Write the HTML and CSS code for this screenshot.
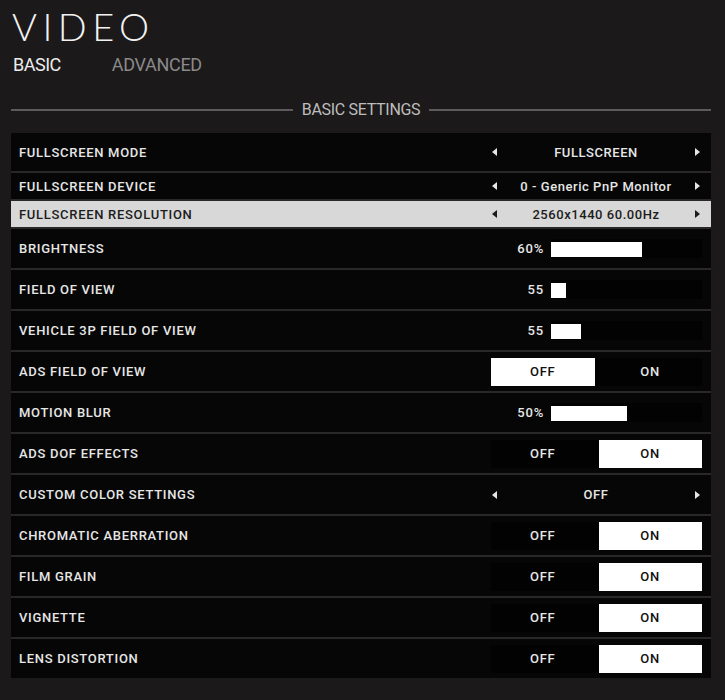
FILE: index.html
```html
<!DOCTYPE html>
<html lang="en">
<head>
<meta charset="utf-8">
<title>Video Settings</title>
<link rel="stylesheet" href="styles.css">
</head>
<body>
<div class="page">
  <h1 class="title">VIDEO</h1>
  <nav class="tabs">
    <span class="tab active">BASIC</span>
    <span class="tab">ADVANCED</span>
  </nav>
  <div class="section-head">
    <span class="line"></span>
    <span class="section-title">BASIC SETTINGS</span>
    <span class="line"></span>
  </div>
  <div class="panel">
    <div class="row tall">
      <span class="label">FULLSCREEN MODE</span>
      <div class="control selector"><span class="arrow left"></span><span class="value">FULLSCREEN</span><span class="arrow right"></span></div>
    </div>
    <div class="row short">
      <span class="label">FULLSCREEN DEVICE</span>
      <div class="control selector"><span class="arrow left"></span><span class="value">0 - Generic PnP Monitor</span><span class="arrow right"></span></div>
    </div>
    <div class="row short selected">
      <span class="label">FULLSCREEN RESOLUTION</span>
      <div class="control selector"><span class="arrow left"></span><span class="value">2560x1440 60.00Hz</span><span class="arrow right"></span></div>
    </div>
    <div class="row">
      <span class="label">BRIGHTNESS</span>
      <div class="control slider"><span class="num">60%</span><span class="track"><span class="fill" style="width:60%"></span></span></div>
    </div>
    <div class="row">
      <span class="label">FIELD OF VIEW</span>
      <div class="control slider"><span class="num">55</span><span class="track"><span class="fill" style="width:10%"></span></span></div>
    </div>
    <div class="row">
      <span class="label">VEHICLE 3P FIELD OF VIEW</span>
      <div class="control slider"><span class="num">55</span><span class="track"><span class="fill" style="width:20%"></span></span></div>
    </div>
    <div class="row">
      <span class="label">ADS FIELD OF VIEW</span>
      <div class="control toggle"><span class="opt on">OFF</span><span class="opt">ON</span></div>
    </div>
    <div class="row">
      <span class="label">MOTION BLUR</span>
      <div class="control slider"><span class="num">50%</span><span class="track"><span class="fill" style="width:50%"></span></span></div>
    </div>
    <div class="row">
      <span class="label">ADS DOF EFFECTS</span>
      <div class="control toggle"><span class="opt">OFF</span><span class="opt on">ON</span></div>
    </div>
    <div class="row">
      <span class="label">CUSTOM COLOR SETTINGS</span>
      <div class="control selector"><span class="arrow left"></span><span class="value">OFF</span><span class="arrow right"></span></div>
    </div>
    <div class="row">
      <span class="label">CHROMATIC ABERRATION</span>
      <div class="control toggle"><span class="opt">OFF</span><span class="opt on">ON</span></div>
    </div>
    <div class="row">
      <span class="label">FILM GRAIN</span>
      <div class="control toggle"><span class="opt">OFF</span><span class="opt on">ON</span></div>
    </div>
    <div class="row">
      <span class="label">VIGNETTE</span>
      <div class="control toggle"><span class="opt">OFF</span><span class="opt on">ON</span></div>
    </div>
    <div class="row">
      <span class="label">LENS DISTORTION</span>
      <div class="control toggle"><span class="opt">OFF</span><span class="opt on">ON</span></div>
    </div>
  </div>
</div>
</body>
</html>
```

FILE: styles.css
```css
* { box-sizing: border-box; }

html, body {
  margin: 0;
  padding: 0;
  background: #1c191a;
  height: 100%;
}

body {
  font-family: Roboto, "Liberation Sans", sans-serif;
  color: #e8e8e8;
}

.page {
  padding: 7px 14px 0 11px;
}

.title {
  margin: 0;
  font-family: Lato, "Liberation Sans", sans-serif;
  font-weight: 300;
  font-size: 38px;
  line-height: 38px;
  letter-spacing: 5.5px;
  color: #f2f2f2;
  padding-left: 1px;
}

.tabs {
  margin-top: 10px;
  display: flex;
  gap: 51px;
  padding-left: 2px;
  height: 20px;
}

.tab {
  font-size: 18px;
  line-height: 20px;
  letter-spacing: -0.3px;
  color: #8a8a8a;
}

.tab.active {
  color: #ececec;
  letter-spacing: -0.5px;
}

.section-head {
  margin-top: 26px;
  display: flex;
  align-items: center;
  gap: 9px;
  height: 18px;
}

.line {
  flex: 1;
  height: 2px;
  background: #5c5a5b;
}

.section-title {
  font-size: 16px;
  line-height: 18px;
  letter-spacing: -0.3px;
  color: #bdbdbd;
}

.panel {
  margin-top: 14px;
  display: flex;
  flex-direction: column;
  gap: 2px;
  background: #2a2728;
}

.row {
  height: 39px;
  display: flex;
  align-items: center;
  justify-content: space-between;
  padding: 0 9px 0 8px;
  background: #060606;
}

.row.tall { height: 38px; }
.row.short { height: 26px; }

.row.selected {
  background: #d8d8d8;
}

.label {
  font-size: 13px;
  font-weight: 500;
  letter-spacing: 0.7px;
  color: #e6e6e6;
}

.row.selected .label,
.row.selected .value {
  color: #1c1c1c;
}

.control {
  width: 211px;
  display: flex;
  align-items: center;
}

.selector {
  justify-content: space-between;
  padding: 0 2px 0 1px;
}

.value {
  font-size: 13px;
  font-weight: 500;
  letter-spacing: 0.55px;
  color: #e6e6e6;
}

.arrow {
  width: 0;
  height: 0;
  border-top: 4px solid transparent;
  border-bottom: 4px solid transparent;
}

.arrow.left { border-right: 5px solid #e6e6e6; }
.arrow.right { border-left: 5px solid #e6e6e6; }

.row.selected .arrow.left { border-right-color: #1c1c1c; }
.row.selected .arrow.right { border-left-color: #1c1c1c; }

.slider {
  justify-content: flex-end;
}

.num {
  font-size: 13px;
  font-weight: 500;
  letter-spacing: 0.8px;
  color: #e6e6e6;
  margin-right: 7px;
}

.track {
  width: 151px;
  height: 19px;
  padding: 3px 0 1px;
  background: #020202;
  display: flex;
}

.fill {
  display: block;
  height: 100%;
  background: #fff;
}

.toggle {
  display: grid;
  grid-template-columns: 1fr 1fr;
  gap: 4px;
  height: 28px;
  background: #020202;
}

.opt {
  display: flex;
  align-items: center;
  justify-content: center;
  font-size: 13px;
  font-weight: 500;
  letter-spacing: 0.8px;
  color: #e6e6e6;
  height: 100%;
}

.opt.on {
  background: #fff;
  color: #111;
}
```
